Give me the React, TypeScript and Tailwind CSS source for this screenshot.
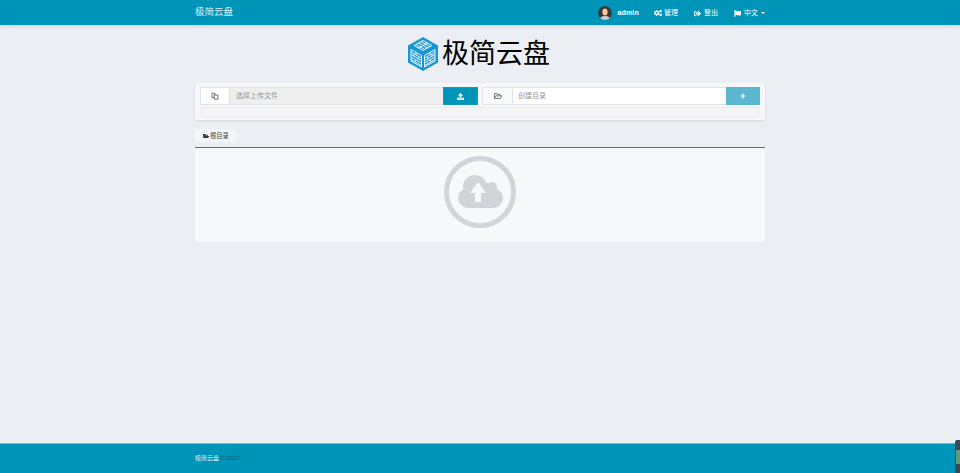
import { FaCogs, FaFlag, FaFolderOpen, FaPlus, FaRegFolderOpen, FaSignOutAlt, FaUpload } from "react-icons/fa";

const font = { fontFamily: '"Liberation Sans", "Noto Sans CJK SC", sans-serif' };

function Logo() {
  return (
    <svg width="32" height="34" viewBox="0 0 32 34">
      <path d="M16 0 L31 8.5 V25.5 L16 34 L1 25.5 V8.5 Z" fill="#1795d9" />
      <g stroke="#e8f5fc" strokeWidth="1" fill="none">
        <path d="M7 8.5 L16 3.5 L25 8.5 L16 13.5 Z" />
        <path d="M11.5 6 L20.5 11 M20.5 6 L11.5 11 M9 7.5 L18 12.5 M14 4.7 L23 9.7" />
        <path d="M4 12.5 L14.5 18.5 V30 L4 24 Z" />
        <path d="M4 15 L14.5 21 M4 17.5 L14.5 23.5 M4 20 L14.5 26 M4 22.5 L14.5 28.5 M9 15.5 V18 M7 17 V19.5 M11 20 V22.5 M8.5 22 V24.5" />
        <path d="M28 12.5 L17.5 18.5 V30 L28 24 Z" />
        <path d="M28 15 L17.5 21 M28 17.5 L17.5 23.5 M28 20 L17.5 26 M28 22.5 L17.5 28.5 M23 15.5 V18 M25 17 V19.5 M21 20 V22.5 M23.5 22 V24.5" />
      </g>
    </svg>
  );
}

function Avatar() {
  return (
    <svg width="14" height="14" viewBox="0 0 14 14" className="rounded-full">
      <circle cx="7" cy="7" r="7" fill="#3a3532" />
      <ellipse cx="7" cy="6" rx="2.6" ry="3.6" fill="#f0c5a0" />
      <path d="M1.5 14 C2 10.5 5 10 7 10 C9 10 12 10.5 12.5 14 Z" fill="#c9cdd0" />
    </svg>
  );
}

function FilesIcon() {
  return (
    <svg width="8" height="8" viewBox="0 0 8 8" fill="none" stroke="#555" strokeWidth="0.8">
      <path d="M1 1.2 H4 V5.5 H1 Z" />
      <path d="M3.2 3 H7 V7.2 H3.2 Z" fill="#fff" />
    </svg>
  );
}

function CloudIcon() {
  return (
    <svg width="45" height="34" viewBox="0 0 45 34">
      <g fill="#d1d4d8">
        <rect x="0" y="13" width="45" height="20" rx="10" />
        <circle cx="17" cy="12" r="12" />
        <circle cx="34" cy="12" r="5" />
        <rect x="14" y="8" width="22" height="10" />
      </g>
      <path d="M20 7 L28 18 H23 V27 H17 V18 H12 Z" fill="#f6f8fa" />
    </svg>
  );
}

export default function App() {
  return (
    <div className="h-screen flex flex-col bg-[#ebeef3] relative overflow-hidden" style={font}>
      <nav className="h-[25px] shrink-0 bg-[#0094b8] shadow-[0_1px_3px_rgba(0,0,0,0.15)]">
        <div className="w-[570px] mx-auto h-full flex items-center justify-between text-white">
          <span className="text-[9.5px] text-[#dff3f8]">极简云盘</span>
          <div className="flex items-center text-[7px] pt-[1px]">
            <Avatar />
            <span className="ml-[5px] font-bold tracking-[0.2px]">admin</span>
            <FaCogs className="ml-[15px] w-[8px] h-[8px]" />
            <span className="ml-[2px]">管理</span>
            <FaSignOutAlt className="ml-[16px] w-[7px] h-[7px]" />
            <span className="ml-[3px]">登出</span>
            <FaFlag className="ml-[16px] w-[7px] h-[7px]" />
            <span className="ml-[3px]">中文</span>
            <span className="ml-[3px] border-x-[2px] border-t-[2px] border-x-transparent border-t-white" />
          </div>
        </div>
      </nav>

      <div className="w-[570px] mx-auto">
        <div className="flex items-center justify-center mt-[12px] h-[34px] pr-[3px]">
          <Logo />
          <span className="ml-[3px] text-[27px] text-black leading-none">极简云盘</span>
        </div>

        <div className="mt-[12px] bg-[#f6f7f9] px-[5px] pt-[4px] h-[37px] shadow-[0_1px_2px_rgba(0,0,0,0.1)]">
          <div className="flex justify-between">
            <div className="flex w-[278px] h-[18px] text-[7px]">
              <div className="w-[30px] flex items-center justify-center bg-white border border-[#e0e2e6]">
                <FilesIcon />
              </div>
              <div className="flex-1 flex items-center pl-[6px] bg-[#eeeeee] border-y border-[#e0e2e6] text-[#999]">选择上传文件</div>
              <div className="w-[35px] flex items-center justify-center bg-[#0094b8] border border-[#0f9dbf] text-white">
                <FaUpload className="w-[7px] h-[7px]" />
              </div>
            </div>
            <div className="flex w-[278px] h-[18px] text-[7px]">
              <div className="w-[31px] flex items-center justify-center bg-[#f8f9fb] border border-[#e0e2e6] text-[#555]">
                <FaRegFolderOpen className="w-[8px] h-[8px]" />
              </div>
              <div className="flex-1 flex items-center pl-[5px] bg-white border-y border-[#e0e2e6] text-[#999]">创建目录</div>
              <div className="w-[34px] flex items-center justify-center bg-[#5bb7d0] text-white">
                <FaPlus className="w-[6px] h-[6px]" />
              </div>
            </div>
          </div>
          <div className="mt-[2px] h-[11px] bg-[#f4f4f4] border border-[#ececec]" />
        </div>

        <div className="mt-[9px] w-[41px] h-[13px] bg-[#f3f5f8] flex items-center pl-[8px] pt-[1px] text-[6.3px] text-[#444]">
          <FaFolderOpen className="w-[6px] h-[6px] mr-[1px] text-[#333]" />
          根目录
        </div>

        <div className="mt-[5px] h-[95px] bg-[#f6f8fa] border-t border-[#0f8aa8] flex items-center justify-center pb-[7px]">
          <div className="w-[72px] h-[72px] rounded-full border-[5px] border-[#d1d4d8] flex items-center justify-center">
            <CloudIcon />
          </div>
        </div>
      </div>

      <footer className="mt-auto h-[30px] shrink-0 bg-[#0094b8] border-t border-[#6fbfd3]">
        <div className="w-[570px] mx-auto h-full flex items-center text-[6px] pb-[1px]">
          <span className="text-[#d8f0f6]">极简云盘</span>
          <span className="ml-[1px] text-[#1f5566] text-[6.2px]">© 2017</span>
        </div>
      </footer>

      <div className="absolute right-0 bottom-0 w-[5px] h-[33px] bg-[#3c4a57] rounded-tl-[2px] overflow-hidden">
        <div className="mt-[10px] ml-[1px] h-[14px] bg-[#5f9a7a]" />
      </div>
    </div>
  );
}
